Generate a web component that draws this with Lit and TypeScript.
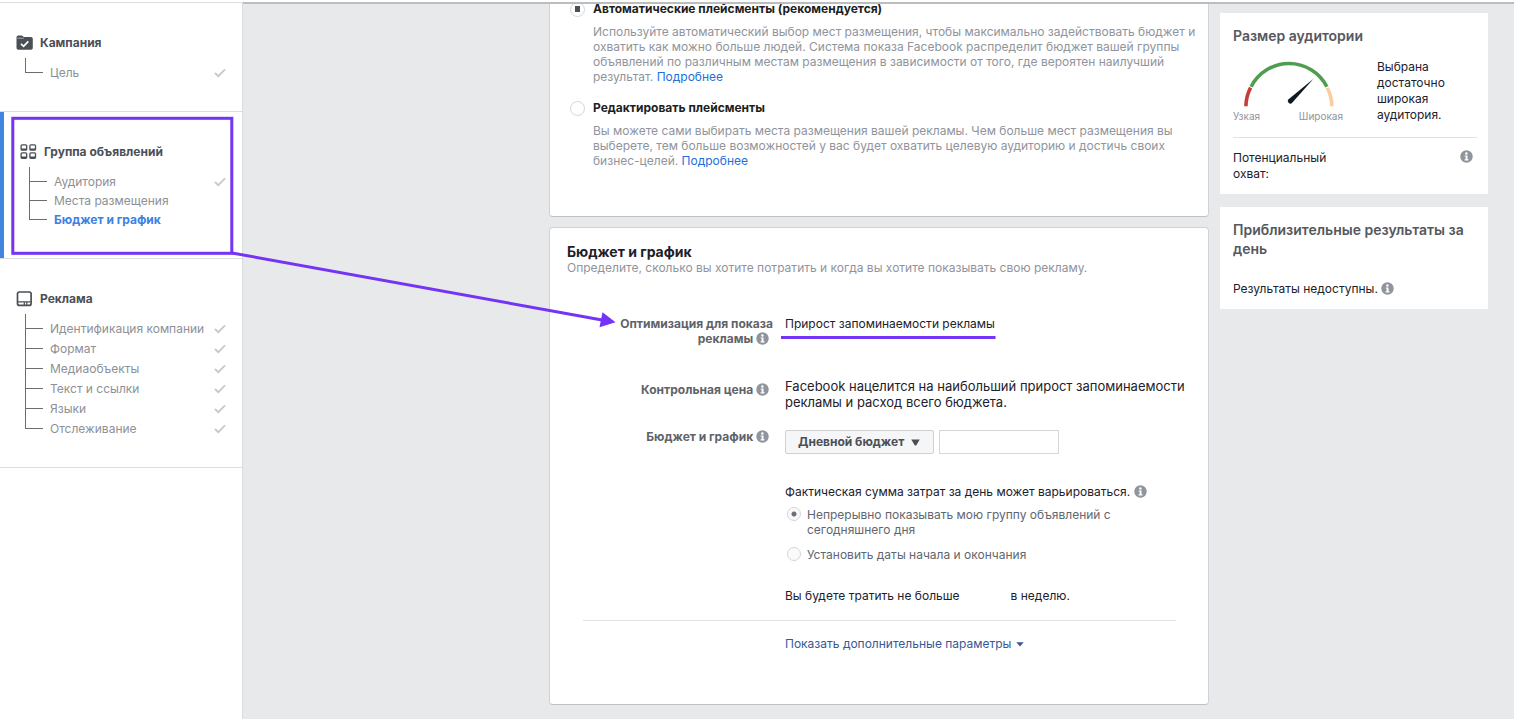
import { LitElement, html, css, svg, nothing } from "lit";
import { customElement, property } from "lit/decorators.js";

interface Step {
  label: string;
  done?: boolean;
  active?: boolean;
}

@customElement("info-icon")
class InfoIcon extends LitElement {
  static styles = css`
    :host { display: inline-block; width: 13px; height: 13px; vertical-align: -2px; }
    .icon { display: block; }
  `;
  render() {
    return html`<svg class="icon" width="13" height="13" viewBox="0 0 13 13" role="img" aria-label="Информация">
      <circle cx="6.5" cy="6.5" r="6.2" fill="#90949c" />
      <circle cx="6.4" cy="3.5" r="1.2" fill="#fff" />
      <path d="M4.7 5.4h2.8v3.8h1v1.2H4.6V9.200h1V6.600h-.9z" fill="#fff" />
    </svg>`;
  }
}

@customElement("nav-group")
class NavGroup extends LitElement {
  @property() heading = "";
  @property() icon = "";
  @property({ attribute: false }) steps: Step[] = [];
  @property({ type: Number }) pitch = 20;

  static styles = css`
    :host { display: block; }
    .head { display: flex; align-items: center; gap: 7px; height: 20px; margin: 0; font-size: 12px; line-height: 20px; font-weight: 700; color: #4b4f56; }
    .body { display: flex; gap: 7px; padding-left: 9px; }
    .tree { flex: none; margin-top: 5px; }
    .list { flex: 1; list-style: none; margin: 10px 0 0; padding: 0; }
    .step { display: flex; align-items: center; justify-content: space-between; font-size: 12px; line-height: 20px; }
    .tight { line-height: 19px; }
    .link { color: #8d9096; text-decoration: none; white-space: nowrap; }
    .active { color: #3b82e4; font-weight: 700; }
    .icon { flex: none; }
  `;

  private glyph() {
    if (this.icon === "folder") {
      return svg`<path d="M.5 3V2.300Q.5.500 2.300.500h3.200q1 0 1.600.8l.6.7H15q1.800 0 1.800 1.800V13q0 1.800-1.800 1.800H2.300Q.5 14.800.5 13z" fill="#4b4f56"/>
        <path d="M1.200 3.200h6.600" stroke="#c9cbd0" stroke-width=".7"/>
        <path d="M5 8.800l2.600 2.500 4.700-5" fill="none" stroke="#fff" stroke-width="1.700"/>`;
    }
    if (this.icon === "grid") {
      return svg`<g fill="none" stroke="#4b4f56" stroke-width="1.300">
        <rect x="1.100" y=".8" width="5.600" height="5.400" rx="1"/><rect x="9.900" y=".8" width="5.600" height="5.400" rx="1"/>
        <rect x="1.100" y="8.900" width="5.600" height="5.400" rx="1"/><rect x="9.900" y="8.900" width="5.600" height="5.400" rx="1"/>
        <path d="M1.100 5.200h5.600M9.900 5.200h5.600M1.100 13.300h5.600M9.900 13.300h5.600" stroke-width="1.500"/></g>`;
    }
    return svg`<rect x="1.500" y="1" width="13.600" height="13.400" rx="2" fill="none" stroke="#4b4f56" stroke-width="1.700"/>
      <path d="M2 10.900h12.600M8.300 11v3M10.800 11v3" stroke="#4b4f56" stroke-width="1.200"/>`;
  }

  render() {
    const ys = this.steps.map((_, i) => 4.5 + this.pitch / 2 + Math.round(i * this.pitch)).map((y) => Math.floor(y) + 0.5);
    const end = ys[ys.length - 1] ?? 0;
    return html`
      <h2 class="head">
        <svg class="icon" width="17" height="16" viewBox="0 0 17 16" aria-hidden="true">${this.glyph()}</svg>
        ${this.heading}
      </h2>
      <div class="body">
        <svg class="tree" width="18" height=${end + 0.5} aria-hidden="true">
          <path d=${`M.5 0V${end}` + ys.map((y) => `M0 ${y}H18`).join("")} fill="none" stroke="#6a6d72" />
        </svg>
        <ul class="list">
          ${this.steps.map(
            (s) => html`<li class="step ${this.pitch < 20 ? "tight" : ""}">
              <a class="link ${s.active ? "active" : ""}" href="#">${s.label}</a>
              ${s.done
                ? html`<svg class="icon" width="12" height="10" viewBox="0 0 12 10" role="img" aria-label="Готово">
                    <path d="M1 5l3.300 3.200L11 1.300" fill="none" stroke="#c6c8cc" stroke-width="1.800" />
                  </svg>`
                : nothing}
            </li>`
          )}
        </ul>
      </div>
    `;
  }
}

@customElement("app-root")
class AppRoot extends LitElement {
  static styles = css`
    :host { display: block; position: relative; font-family: Inter, "Liberation Sans", sans-serif; font-size: 12px; line-height: 16px; color: #1d2129; background: #fff; overflow: hidden; }
    * { box-sizing: border-box; }
    .page { display: flex; min-height: 100vh; padding: 2px 0 1px; }
    .sidebar { flex: none; width: 243px; background: #fff; border-right: 1px solid #dadcdf; border-top: 1px solid #dcdddf; }
    .group { padding: 30px 16px 28px; border-bottom: 1px solid #dcdddf; }
    .current { padding: 30px 16px 29px 20px; box-shadow: inset 4px 0 #4285e0; }
    .main { flex: 1; display: flex; justify-content: flex-end; gap: 11px; padding-right: 26px; background: #e8e9eb; border-top: 2px solid #bcbdbf; overflow: hidden; }
    .content { flex: 0 1 660px; display: flex; flex-direction: column; gap: 10px; padding-bottom: 14px; }
    .card { background: #fff; border: 1px solid #d0d2d5; border-bottom-color: #bfc1c4; border-radius: 4px; }
    .placements { margin: -6px 0 0; padding: 2px 8px 48px 20px; }
    .option { display: grid; grid-template-columns: 16px 1fr; column-gap: 7px; align-items: center; }
    .option + .option { margin-top: 16px; }
    .name { font-size: 12px; line-height: 16px; font-weight: 700; color: #1c1e21; }
    .note { grid-column: 2; margin: 7px 0 0; font-size: 12px; line-height: 15px; color: #90949c; }
    .note a { color: #216fdb; text-decoration: none; }
    .radio { appearance: none; margin: 0; width: 15px; height: 15px; border: 1px solid #d3d5d9; border-radius: 50%; background: #fff; }
    .square:checked { background: linear-gradient(#4b4f56, #4b4f56) center / 5px 6px no-repeat #fff; }
    .round { width: 14px; height: 14px; background: #fafafa; }
    .round:checked { background: radial-gradient(circle, #6a6f79 2px, #fafafa 3px); }
    .budget { padding: 15px 16px 51px 17px; }
    .title { margin: 0; font-size: 14px; line-height: 18px; font-weight: 700; }
    .sub { margin: 0; font-size: 12px; line-height: 14px; color: #90949c; }
    .form { display: grid; grid-template-columns: 206px 1fr; column-gap: 12px; margin-top: 41px; align-items: start; }
    .label { text-align: right; font-weight: 700; line-height: 15px; color: #606368; }
    .label info-icon, .reach info-icon { margin-right: 4px; }
    .bid { margin-top: 32px; font-size: 13px; }
    .bid-label { margin-top: 36px; }
    .kind-label { margin-top: 19px; }
    .controls { display: flex; gap: 5px; margin-top: 20px; }
    .picker { position: relative; display: flex; }
    .select { appearance: none; height: 24px; width: 149px; padding: 0 12px; border: 1px solid #ced0d4; border-radius: 2px; background: #f5f6f7; color: #4b4f56; font: 700 12px/16px Inter, sans-serif; }
    .caret { position: absolute; right: 14px; top: 9px; pointer-events: none; }
    .amount { height: 24px; width: 120px; border: 1px solid #d5d7da; background: #fff; font: 12px Inter, sans-serif; padding: 0 8px; }
    .details { grid-column: 2; padding-top: 30px; }
    .choices { display: grid; gap: 10px; margin: 7px 0 26px; padding-left: 2px; }
    .choice { display: grid; grid-template-columns: 14px minmax(0, 310px); gap: 6px; line-height: 15px; color: #606770; align-items: start; }
    .week { display: flex; gap: 51px; }
    .rule { border: 0; border-top: 1px solid #e1e2e4; margin: 16px 16px 0; }
    .more { display: inline-flex; align-items: center; gap: 5px; margin: 14px 0 0 218px; padding: 0; border: 0; background: none; color: #385898; font: 12px/18px Inter, sans-serif; }
    .aside { flex: none; width: 268px; padding-top: 9px; display: flex; flex-direction: column; gap: 13px; }
    .panel { background: #fff; padding: 13px 11px 12px 13px; }
    .heading { margin: 0; font-size: 14px; line-height: 19px; font-weight: 600; color: #55585d; }
    .size { display: flex; justify-content: space-between; padding: 14px 0 13px; border-bottom: 1px solid #e1e2e4; }
    .meter { width: 110px; padding-top: 2px; }
    .gauge { display: block; margin-left: 11px; }
    .scale { display: flex; justify-content: space-between; font-size: 10px; line-height: 16px; color: #90949c; margin-top: 1px; }
    .verdict { margin: 0; width: 100px; }
    .reach { display: flex; justify-content: space-between; padding-top: 12px; }
    .reach-name { width: 110px; }
    .none { margin: 23px 0 0; }
    .overlay { position: absolute; left: 0; top: 0; pointer-events: none; }
  `;

  render() {
    return html`
      <div class="page">
        <nav class="sidebar">
          <nav-group class="group" heading="Кампания" icon="folder" .steps=${[{ label: "Цель", done: true }]}></nav-group>
          <nav-group class="group current" heading="Группа объявлений" icon="grid" .pitch=${19}
            .steps=${[{ label: "Аудитория", done: true }, { label: "Места размещения" }, { label: "Бюджет и график", active: true }]}></nav-group>
          <nav-group class="group" heading="Реклама" icon="tablet"
            .steps=${["Идентификация компании", "Формат", "Медиаобъекты", "Текст и ссылки", "Языки", "Отслеживание"].map((label) => ({ label, done: true }))}></nav-group>
        </nav>
        <main class="main">
          <div class="content">
            <section class="card placements">
              <div class="option">
                <input class="radio square" type="radio" name="placement" id="auto" checked />
                <label class="name" for="auto">Автоматические плейсменты (рекомендуется)</label>
                <p class="note">Используйте автоматический выбор мест размещения, чтобы максимально задействовать бюджет и охватить как можно больше людей. Система показа Facebook распределит бюджет вашей группы объявлений по различным местам размещения в зависимости от того, где вероятен наилучший результат. <a href="#">Подробнее</a></p>
              </div>
              <div class="option">
                <input class="radio square" type="radio" name="placement" id="manual" />
                <label class="name" for="manual">Редактировать плейсменты</label>
                <p class="note">Вы можете сами выбирать места размещения вашей рекламы. Чем больше мест размещения вы выберете, тем больше возможностей у вас будет охватить целевую аудиторию и достичь своих бизнес-целей. <a href="#">Подробнее</a></p>
              </div>
            </section>
            <section class="card budget">
              <h2 class="title">Бюджет и график</h2>
              <p class="sub">Определите, сколько вы хотите потратить и когда вы хотите показывать свою рекламу.</p>
              <div class="form">
                <div class="label">Оптимизация для показа рекламы <info-icon></info-icon></div>
                <div>Прирост запоминаемости рекламы</div>
                <div class="label bid-label">Контрольная цена <info-icon></info-icon></div>
                <div class="bid">Facebook нацелится на наибольший прирост запоминаемости рекламы и расход всего бюджета.</div>
                <label class="label kind-label" for="kind">Бюджет и график <info-icon></info-icon></label>
                <div class="controls">
                  <span class="picker">
                    <select class="select" id="kind"><option>Дневной бюджет</option></select>
                    <svg class="caret" width="9" height="7" viewBox="0 0 9 7" aria-hidden="true"><path d="M.3.500h8.400L5.500 6q-1 1-2 0z" fill="#4b4f56" /></svg>
                  </span>
                  <input class="amount" type="text" aria-label="Сумма бюджета" />
                </div>
                <div class="details">
                  <div>Фактическая сумма затрат за день может варьироваться. <info-icon></info-icon></div>
                  <div class="choices">
                    <div class="choice"><input class="radio round" type="radio" name="dates" id="always" checked /><label for="always">Непрерывно показывать мою группу объявлений с сегодняшнего дня</label></div>
                    <div class="choice"><input class="radio round" type="radio" name="dates" id="range" /><label for="range">Установить даты начала и окончания</label></div>
                  </div>
                  <div class="week"><span>Вы будете тратить не больше</span><span>в неделю.</span></div>
                </div>
              </div>
              <hr class="rule" />
              <button class="more" type="button">Показать дополнительные параметры
                <svg width="8" height="5" viewBox="0 0 8 5" aria-hidden="true"><path d="M.3.300h7.400L4 4.600z" fill="#385898" /></svg>
              </button>
            </section>
          </div>
          <aside class="aside">
            <section class="panel">
              <h2 class="heading">Размер аудитории</h2>
              <div class="size">
                <div class="meter">
                  <svg class="gauge" width="90" height="46" viewBox="0 0 90 46" aria-hidden="true">
                    <g fill="none" stroke-width="3.600">
                      <path d="M1.900 45.300Q2 35.500 6.600 26.700" stroke="#c43d3a" />
                      <path d="M7.100 25.700A42.500 42.500 0 0 1 82.800 25.700" stroke="#4f9e50" />
                      <path d="M83.300 26.700Q87.700 35.500 87.900 45.300" stroke="#fbcd9b" />
                    </g>
                    <path d="M69.500 17.800L48.200 41.800a2.500 2.500 0 1 1-3.600-3.600z" fill="#101820" />
                  </svg>
                  <div class="scale"><span>Узкая</span><span>Широкая</span></div>
                </div>
                <p class="verdict">Выбрана достаточно широкая аудитория.</p>
              </div>
              <div class="reach"><span class="reach-name">Потенциальный охват:</span><info-icon></info-icon></div>
            </section>
            <section class="panel">
              <h2 class="heading">Приблизительные результаты за день</h2>
              <p class="none">Результаты недоступны. <info-icon></info-icon></p>
            </section>
          </aside>
        </main>
      </div>
      <svg class="overlay" width="1000" height="345" viewBox="0 0 1000 345" aria-hidden="true">
        <g fill="none" stroke="#7433f5" stroke-width="3">
          <rect x="12.800" y="118.300" width="219" height="135" />
          <path d="M232 253L602 320" />
          <path d="M781 337.500H995.500" />
        </g>
        <path d="M615.500 322.300L599.500 327.300 602.500 312.200z" fill="#7433f5" />
      </svg>
    `;
  }
}
